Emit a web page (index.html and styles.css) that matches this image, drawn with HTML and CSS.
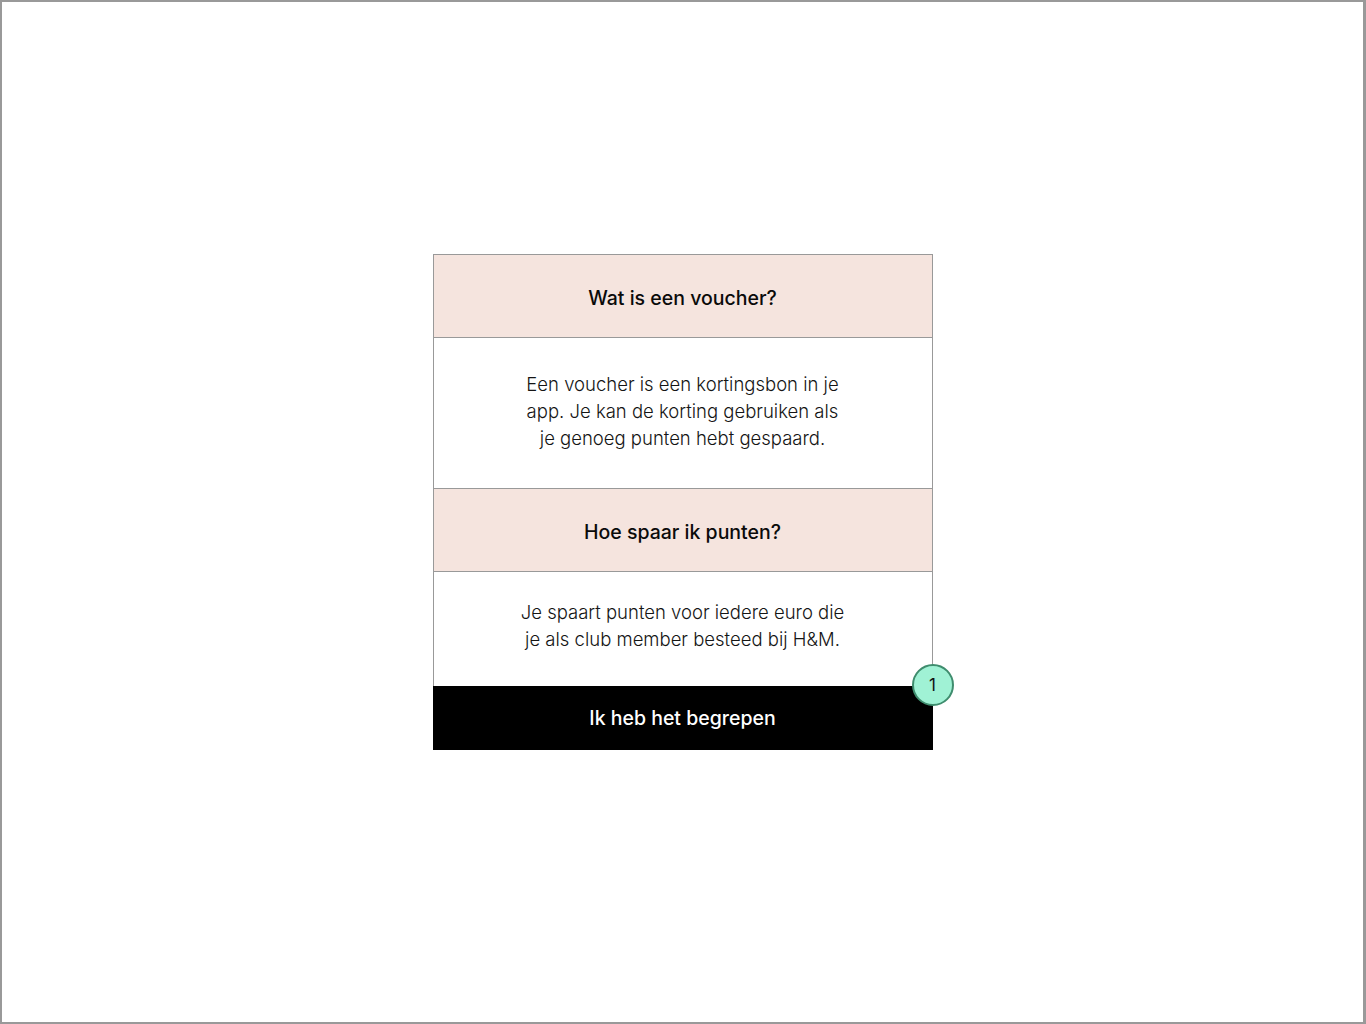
FILE: index.html
```html
<!DOCTYPE html>
<html lang="nl">
<head>
<meta charset="UTF-8" />
<title>Wat is een voucher?</title>
<link rel="stylesheet" href="styles.css">
</head>
<body>
<div class="frame">
  <div class="card">
    <div class="faq-title faq-title--first">Wat is een voucher?</div>
    <div class="faq-text faq-text--tall">
      <p>Een voucher is een kortingsbon in je<br>app. Je kan de korting gebruiken als<br>je genoeg punten hebt gespaard.</p>
    </div>
    <div class="faq-title">Hoe spaar ik punten?</div>
    <div class="faq-text faq-text--short">
      <p>Je spaart punten voor iedere euro die<br>je als club member besteed bij H&amp;M.</p>
    </div>
    <button class="confirm" type="button">Ik heb het begrepen</button>
    <span class="marker">1</span>
  </div>
</div>
</body>
</html>
```

FILE: styles.css
```css
/* Reset */
* {
  box-sizing: border-box;
}
html, body {
  margin: 0;
  padding: 0;
  background: #fff;
  font-family: Inter, "Liberation Sans", Arial, sans-serif;
  color: #111;
}
.frame {
  width: 1366px;
  height: 1024px;
  border: 2px solid #999;
  border-right-width: 3px;
  display: flex;
  flex-direction: column;
  align-items: center;
  padding-top: 252px;
}
.card {
  position: relative;
  width: 500px;
  display: flex;
  flex-direction: column;
}
.faq-title {
  height: 83px;
  background: #f5e4de;
  border: 1px solid #999;
  border-top: none;
  padding-top: 3px;
  display: flex;
  align-items: center;
  justify-content: center;
  font-size: 19.5px;
  font-weight: 500;
  color: #0a0a0a;
}
.faq-title--first {
  height: 84px;
  border-top: 1px solid #999;
}
.faq-text {
  border: 1px solid #999;
  border-top: none;
  display: flex;
  align-items: center;
  justify-content: center;
  text-align: center;
}
.faq-text--tall {
  height: 151px;
  padding-bottom: 4px;
}
.faq-text--short {
  height: 114px;
  border-bottom: none;
  padding-bottom: 7px;
}
.faq-text p {
  margin: 0;
  font-size: 18.5px;
  line-height: 27px;
  font-weight: 300;
  color: #151515;
}
.confirm {
  height: 64px;
  border: none;
  background: #000;
  color: #fff;
  font-family: inherit;
  font-size: 19.5px;
  font-weight: 500;
  padding: 0;
}
.marker {
  position: absolute;
  right: -21px;
  top: 410px;
  width: 42px;
  height: 42px;
  border-radius: 50%;
  background: #a0f2d5;
  border: 2px solid #3f8d6e;
  display: flex;
  align-items: center;
  justify-content: center;
  font-size: 17px;
  color: #111;
}
```
